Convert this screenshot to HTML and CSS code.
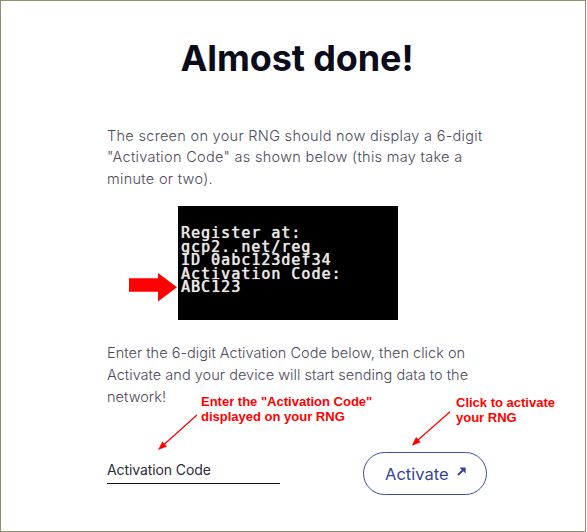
FILE: index.html
```html
<!DOCTYPE html>
<html lang="en">
<head>
<meta charset="utf-8">
<title>Almost done!</title>
<link rel="stylesheet" href="styles.css">
</head>
<body>
<div class="frame">
  <main class="content">
    <h1 class="title">Almost done!</h1>
    <p class="text text-first">The screen on your RNG should now display a 6-digit "Activation Code" as shown below (this may take a minute or two).</p>
    <figure class="figure">
      <svg class="block-arrow" width="48" height="29" viewBox="0 0 48 29" aria-hidden="true">
        <polygon points="0,5.3 29,5.3 29,0 48,14.2 29,28.4 29,18.7 0,18.7" fill="#ff0000"/>
      </svg>
      <div class="screen">Register at:
gcp2..net/reg
ID 0abc123def34
Activation Code:
ABC123</div>
    </figure>
    <p class="text text-second">Enter the 6-digit Activation Code below, then click on Activate and your device will start sending data to the network!</p>
    <div class="form-row">
      <div class="field"><span class="field-label">Activation Code</span></div>
      <button class="btn" type="button">Activate
        <svg class="btn-icon" width="9" height="9" viewBox="0 0 9 9" aria-hidden="true">
          <path d="M1 8 L7.3 1.7" stroke="currentColor" stroke-width="2" fill="none"/>
          <path d="M2.4 0.4 H8.6 V6.6 Z" fill="currentColor"/>
        </svg>
      </button>
    </div>
  </main>
  <div class="note note-left">Enter the "Activation Code"<br>displayed on your RNG</div>
  <div class="note note-right">Click to activate<br>your RNG</div>
  <svg class="pointers" width="586" height="532" viewBox="0 0 586 532" aria-hidden="true">
    <line x1="197" y1="415" x2="164" y2="444.5" stroke="#ff0000" stroke-width="1.2"/>
    <polygon points="158,450 167,446.6 162.4,441.4" fill="#ff0000"/>
    <line x1="450" y1="411.7" x2="418" y2="440" stroke="#ff0000" stroke-width="1.2"/>
    <polygon points="411.7,445.7 420.7,442.3 416.1,437.1" fill="#ff0000"/>
  </svg>
</div>
</body>
</html>
```
FILE: styles.css
```css
html, body {
  margin: 0;
  padding: 0;
  background: #ffffff;
}

.frame {
  position: relative;
  width: 586px;
  height: 532px;
  box-sizing: border-box;
  border: 1px solid #8b926b;
  background: #ffffff;
  overflow: hidden;
}

.content {
  width: 380px;
  margin-left: 106px;
  display: flex;
  flex-direction: column;
}

.title {
  margin: 36px 0 0;
  font-family: "Inter", "Liberation Sans", sans-serif;
  font-weight: 700;
  font-size: 36px;
  line-height: 43px;
  text-align: center;
  color: #0b0b1a;
  letter-spacing: -0.1px;
}

.text {
  margin: 0;
  font-family: "Inter", "Liberation Sans", sans-serif;
  font-weight: 300;
  font-size: 14.5px;
  line-height: 21.4px;
  color: #4a4a5a;
}

.text-first {
  margin-top: 45px;
  letter-spacing: 0.3px;
}

.figure {
  margin: 17px 0 0 22px;
  display: flex;
  align-items: flex-start;
  gap: 1px;
}

.block-arrow {
  display: block;
  margin-top: 67px;
  flex: none;
}

.screen {
  width: 220px;
  height: 114px;
  box-sizing: border-box;
  background: #000000;
  padding: 21px 0 0 3px;
  white-space: pre;
  font-family: "DejaVu Sans Mono", "Liberation Mono", monospace;
  font-weight: 400;
  font-size: 15px;
  letter-spacing: 1px;
  line-height: 13.5px;
  color: #e8e8e8;
  text-shadow: 0 0 1px rgba(255, 255, 255, 0.8), 0.5px 0 0 rgba(255, 255, 255, 0.5);
}

.text-second {
  margin-top: 22px;
  line-height: 22px;
  letter-spacing: 0.03px;
}

.form-row {
  margin-top: 44px;
  display: flex;
  justify-content: space-between;
  align-items: flex-start;
}

.field {
  width: 173px;
  padding: 8px 0 3px;
  border-bottom: 1px solid #111111;
}

.field-label {
  display: block;
  font-family: "Inter", "Liberation Sans", sans-serif;
  font-weight: 400;
  font-size: 14px;
  line-height: 20px;
  color: #2b2b3a;
  letter-spacing: -0.1px;
}

.btn {
  height: 43px;
  width: 124px;
  box-sizing: border-box;
  padding: 0 0 0 21px;
  border: 1px solid #3b4ea0;
  border-radius: 22px;
  background: #ffffff;
  display: flex;
  align-items: center;
  gap: 8px;
  font-family: "Inter", "Liberation Sans", sans-serif;
  font-weight: 400;
  font-size: 16.5px;
  color: #34459a;
  cursor: pointer;
}

.btn-icon {
  display: block;
  margin-top: -5px;
}

.note {
  position: absolute;
  font-family: "Liberation Sans", Arial, sans-serif;
  font-weight: 700;
  font-size: 13px;
  line-height: 15.7px;
  color: #ff0000;
  white-space: nowrap;
}

.note-left {
  left: 200px;
  top: 392.5px;
}

.note-right {
  left: 455px;
  top: 393.5px;
}

.pointers {
  position: absolute;
  left: -1px;
  top: -1px;
  pointer-events: none;
}
```
